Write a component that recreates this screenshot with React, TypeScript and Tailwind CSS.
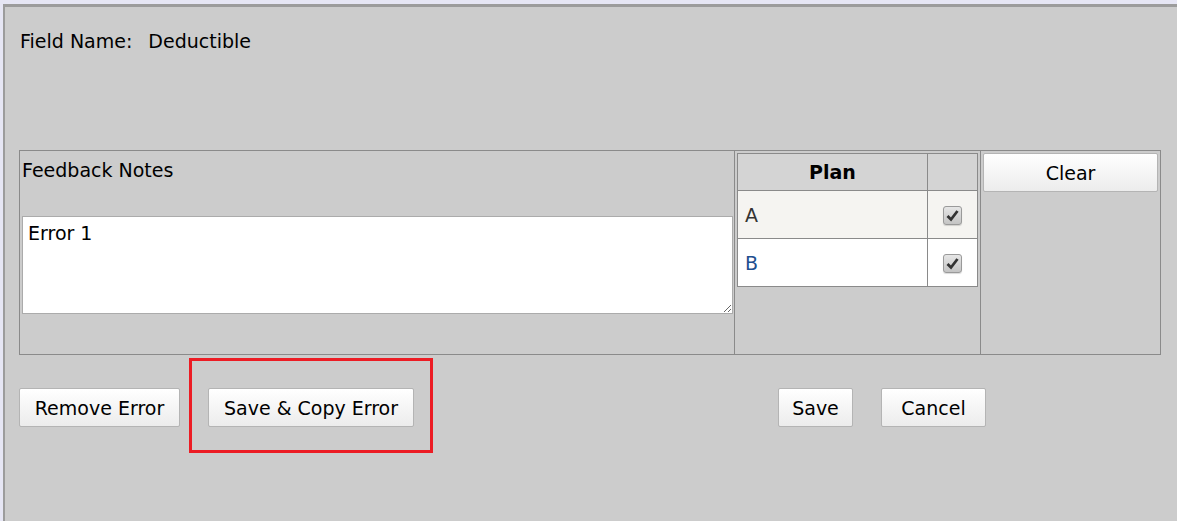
import React from "react";

const FONT = { fontFamily: '"DejaVu Sans", Verdana, sans-serif' };

function Btn({ children, className = "" }: { children: React.ReactNode; className?: string }) {
  return (
    <button
      className={`h-[39px] rounded-[2px] border border-[#b4b4b4] bg-gradient-to-b from-white to-[#ececec] text-[19px] leading-[22px] text-black ${className}`}
    >
      {children}
    </button>
  );
}

function Check() {
  return (
    <span className="inline-flex h-[19px] w-[19px] items-center justify-center rounded-[3px] border border-[#9a9a9a] bg-gradient-to-b from-[#e6e6e6] to-[#c4c4c4] align-middle shadow-[0_1px_1px_rgba(0,0,0,0.15)]">
      <svg width="13" height="13" viewBox="0 0 13 13">
        <path d="M1.5 7 L5 10.5 L11.5 2" fill="none" stroke="#333" strokeWidth="2.8" />
      </svg>
    </span>
  );
}

export default function App() {
  return (
    <div className="h-[521px] w-full overflow-hidden bg-[#e6e6f4] pl-[3px] pt-[4px]" style={FONT}>
      <div className="flex h-full flex-col border-l-2 border-t-[3px] border-[#9c9c9c] bg-[#cccccc] pl-[14px] pr-[16px] pt-[22px]">
        <div className="pl-[1px] text-[19px] leading-[24px] text-black">
          Field Name:<span className="inline-block w-[16px]" />Deductible
        </div>

        <div className="mt-[97px] flex h-[205px] border border-[#8a8a8a]">
          <div className="flex w-[715px] flex-col border-r border-[#8a8a8a] p-[2px]">
            <div className="pt-[5px] text-[19px] leading-[24px] text-black">Feedback Notes</div>
            <textarea
              defaultValue="Error 1"
              className="mt-[34px] h-[98px] w-[711px] resize-y border border-[#ababab] bg-white px-[5px] pt-[4px] text-[19px] leading-[24px] text-black outline-none"
              style={FONT}
            />
          </div>

          <div className="w-[246px] border-r border-[#8a8a8a] p-[2px]">
            <table className="w-[241px] border-collapse text-[19px]">
              <thead>
                <tr className="h-[37px] bg-[#d4d4d4]">
                  <th className="w-[190px] border border-[#8a8a8a] font-bold text-black">Plan</th>
                  <th className="border border-[#8a8a8a]"></th>
                </tr>
              </thead>
              <tbody>
                <tr className="h-[48px] bg-[#f5f4f1]">
                  <td className="border border-[#8a8a8a] pl-[7px] pt-[1px] text-[#333]">A</td>
                  <td className="border border-[#8a8a8a] text-center">
                    <Check />
                  </td>
                </tr>
                <tr className="h-[48px] bg-white">
                  <td className="border border-[#8a8a8a] pl-[7px] pt-[1px] text-[#1f4f8f]">B</td>
                  <td className="border border-[#8a8a8a] text-center">
                    <Check />
                  </td>
                </tr>
              </tbody>
            </table>
          </div>

          <div className="flex-1 p-[2px]">
            <Btn className="w-full">Clear</Btn>
          </div>
        </div>

        <div className="relative mt-[33px] flex items-center">
          <Btn className="w-[161px]">Remove Error</Btn>
          <Btn className="ml-[28px] w-[206px]">Save &amp; Copy Error</Btn>
          <Btn className="ml-[364px] w-[75px]">Save</Btn>
          <Btn className="ml-[28px] w-[105px]">Cancel</Btn>
          <div className="pointer-events-none absolute left-[170px] top-[-30px] h-[95px] w-[244px] border-[3px] border-[#ec1c24]" />
        </div>
      </div>
    </div>
  );
}
